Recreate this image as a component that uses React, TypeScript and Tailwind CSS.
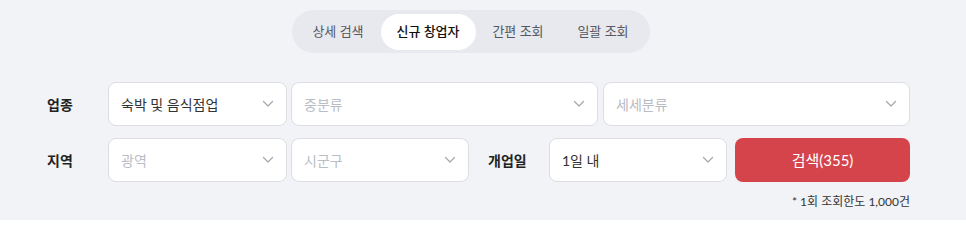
import React from "react";

const font = { fontFamily: "Lato, 'Noto Sans CJK KR', sans-serif" };

const tabs = ["상세 검색", "신규 창업자", "간편 조회", "일괄 조회"];

const Chevron: React.FC = () => (
  <svg width="12" height="8" viewBox="0 0 12 8" fill="none" className="shrink-0">
    <path d="M1.5 1.5l4.5 4.5 4.5-4.5" stroke="#a3a6ad" strokeWidth="1.2" strokeLinecap="round" strokeLinejoin="round" />
  </svg>
);

interface SelectBoxProps {
  value: string;
  placeholder?: boolean;
  width: string;
}

const SelectBox: React.FC<SelectBoxProps> = ({ value, placeholder, width }) => (
  <div
    className={`${width} h-[44px] flex items-center justify-between bg-white border border-[#dcdee3] rounded-[8px] pl-[12px] pr-[12px] text-[14px] ${
      placeholder ? "text-[#babdc4]" : "text-[#333]"
    }`}
  >
    <span>{value}</span>
    <Chevron />
  </div>
);

export default function App() {
  return (
    <div className="w-[966px] h-[220px] bg-[#f2f3f7] overflow-hidden" style={font}>
      <div className="flex justify-center pt-[10px] pr-[25px]">
        <div className="flex items-center h-[43px] px-[4px] rounded-full bg-[#e7e9ee]">
          {tabs.map((t, i) => (
            <div
              key={t}
              className={`h-[36px] flex items-center justify-center rounded-full text-[13px] ${
                i === 1 ? "w-[95px] bg-white text-[#111] font-medium" : "w-[85px] text-[#555860]"
              }`}
            >
              {t}
            </div>
          ))}
        </div>
      </div>

      <div className="pl-[47px] mt-[29px]">
        <div className="flex items-center">
          <div className="w-[61px] text-[14px] font-semibold text-[#222]">업종</div>
          <SelectBox value="숙박 및 음식점업" width="w-[179px]" />
          <div className="ml-[4px]">
            <SelectBox value="중분류" placeholder width="w-[307px]" />
          </div>
          <div className="ml-[5px]">
            <SelectBox value="세세분류" placeholder width="w-[307px]" />
          </div>
        </div>

        <div className="flex items-center mt-[12px]">
          <div className="w-[61px] text-[14px] font-semibold text-[#222]">지역</div>
          <SelectBox value="광역" placeholder width="w-[179px]" />
          <div className="ml-[4px]">
            <SelectBox value="시군구" placeholder width="w-[178px]" />
          </div>
          <div className="w-[80px] pl-[19px] text-[14px] font-semibold text-[#222]">개업일</div>
          <SelectBox value="1일 내" width="w-[178px]" />
          <button className="ml-[8px] w-[175px] h-[44px] rounded-[8px] bg-[#d5444b] text-white text-[15px]">
            검색(355)
          </button>
        </div>

        <div className="w-[863px] text-right mt-[11px] text-[12px] text-[#333]">* 1회 조회한도 1,000건</div>
      </div>
    </div>
  );
}
